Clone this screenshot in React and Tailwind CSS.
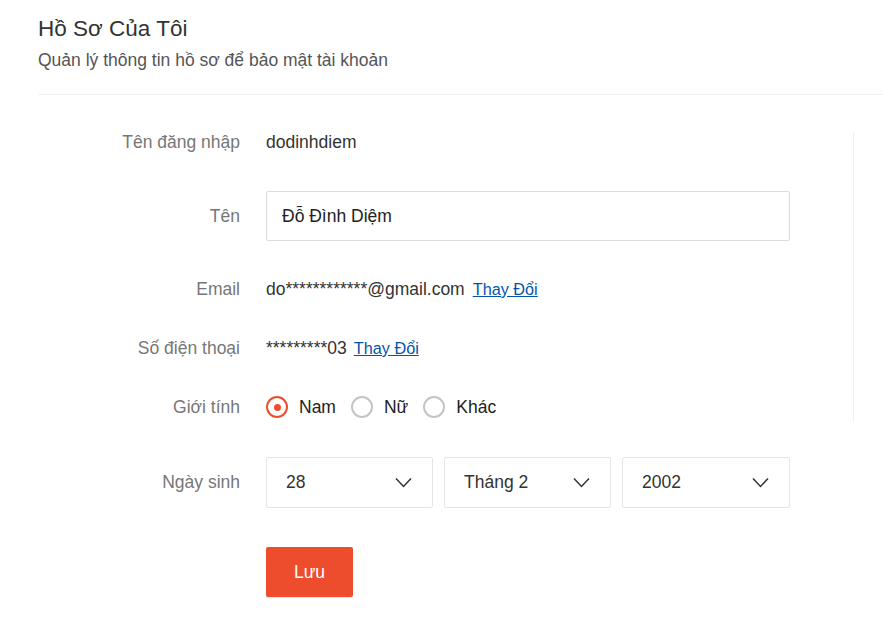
import { useState } from 'react'

const FONT = "font-['Liberation_Sans',Arial,'Noto_Sans',sans-serif]"

function Chevron() {
  return (
    <svg width="17" height="11" viewBox="0 0 17 11" fill="none">
      <polyline points="1,1.5 8.5,9.5 16,1.5" stroke="#333" strokeWidth="1.5" strokeLinejoin="miter" />
    </svg>
  )
}

function Radio({ label, checked, onClick }) {
  return (
    <button type="button" onClick={onClick} className="flex items-center cursor-pointer">
      <span
        className={`w-[22px] h-[22px] rounded-full border-2 flex items-center justify-center ${
          checked ? 'border-[#ee4d2d]' : 'border-[#c4c4c4]'
        }`}
      >
        {checked && <span className="w-[7px] h-[7px] rounded-full bg-[#ee4d2d]" />}
      </span>
      <span className="ml-[11px] text-[17.5px] text-[#222]">{label}</span>
    </button>
  )
}

function Select({ value, width = 'w-[167px]' }) {
  return (
    <div className={`${width} h-[51px] border border-[#e5e5e5] rounded-[2px] flex items-center justify-between pl-[19px] pr-[20px]`}>
      <span className="text-[17.5px] text-[#333]">{value}</span>
      <Chevron />
    </div>
  )
}

function Row({ label, className = '', children }) {
  return (
    <div className={`flex items-center ${className}`}>
      <div className="w-[202px] text-right text-[17.5px] text-[#777] whitespace-nowrap">{label}</div>
      <div className="ml-[26px] flex-1 flex items-center">{children}</div>
    </div>
  )
}

export default function App() {
  const [gender, setGender] = useState('nam')
  const [name, setName] = useState('Đỗ Đình Diệm')

  return (
    <div className={`${FONT} bg-white min-h-screen w-[883px] overflow-hidden pl-[38px]`}>
      {/* ── Header ─────────────────────────────── */}
      <div className="pt-[15px] pb-[22px] border-b border-[#efefef]">
        <h1 className="text-[22.5px] leading-[28px] text-[#333]">Hồ Sơ Của Tôi</h1>
        <p className="mt-[5px] text-[17.5px] leading-[24px] text-[#555]">Quản lý thông tin hồ sơ để bảo mật tài khoản</p>
      </div>

      {/* ── Body ───────────────────────────────── */}
      <div className="flex pt-[22px]">
        <div className="w-[815px] shrink-0 pr-[63px]">
          <Row label="Tên đăng nhập" className="h-[50px]">
            <span className="text-[17.5px] text-[#333]">dodinhdiem</span>
          </Row>

          <Row label="Tên" className="h-[50px] mt-[24px]">
            <input
              value={name}
              onChange={(e) => setName(e.target.value)}
              className="w-full h-[50px] border border-[#dbdbdb] rounded-[2px] px-[15px] text-[17.5px] text-[#222] outline-none"
            />
          </Row>

          <Row label="Email" className="h-[50px] mt-[23px]">
            <span className="text-[17.5px] text-[#333]">do************@gmail.com</span>
            <a href="#" className="ml-[8px] text-[16.25px] text-[#05a] underline">Thay Đổi</a>
          </Row>

          <Row label="Số điện thoại" className="h-[50px] mt-[9px]">
            <span className="text-[17.5px] text-[#333]">*********03</span>
            <a href="#" className="ml-[7px] text-[16.25px] text-[#05a] underline">Thay Đổi</a>
          </Row>

          <Row label="Giới tính" className="h-[50px] mt-[9px]">
            <div className="flex items-center gap-[15px]">
              <Radio label="Nam" checked={gender === 'nam'} onClick={() => setGender('nam')} />
              <Radio label="Nữ" checked={gender === 'nu'} onClick={() => setGender('nu')} />
              <Radio label="Khác" checked={gender === 'khac'} onClick={() => setGender('khac')} />
            </div>
          </Row>

          <Row label="Ngày sinh" className="h-[51px] mt-[25px]">
            <div className="flex gap-[11px]">
              <Select value="28" />
              <Select value="Tháng 2" />
              <Select value="2002" width="w-[168px]" />
            </div>
          </Row>

          <Row label="" className="h-[50px] mt-[39px]">
            <button
              type="button"
              className="w-[87px] h-[50px] rounded-[2px] bg-[#ee4d2d] text-white text-[17.5px] shadow-[0_1px_1px_rgba(0,0,0,0.09)]"
            >
              Lưu
            </button>
          </Row>
        </div>

        {/* ── Avatar side (cut off) ──────────────── */}
        <div className="flex-1 mt-[15px] h-[290px] border-l border-[#efefef]" />
      </div>
    </div>
  )
}
